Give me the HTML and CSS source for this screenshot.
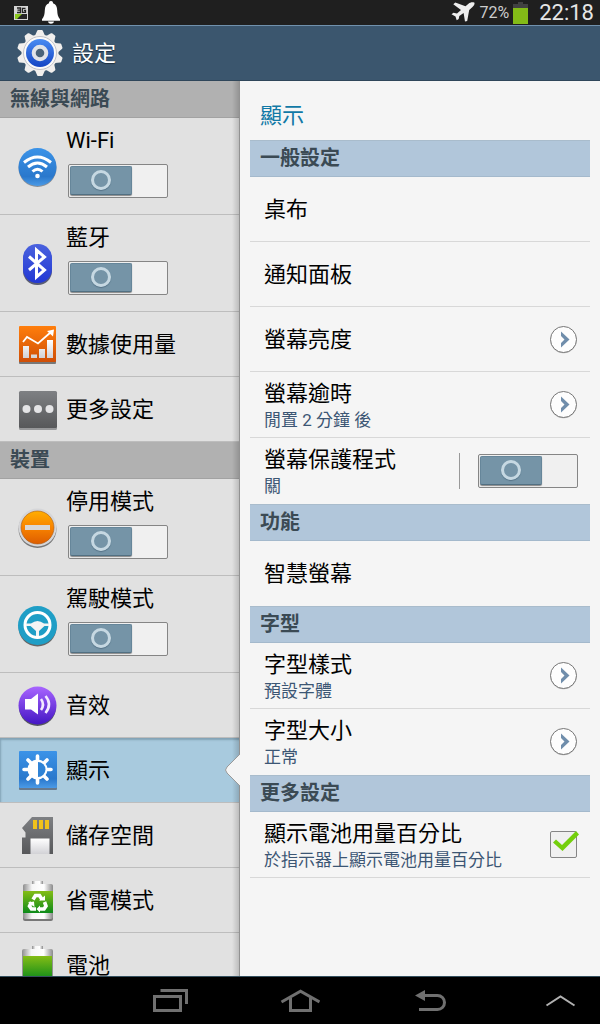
FILE: index.html
```html
<!DOCTYPE html>
<html lang="zh-Hant">
<head>
<meta charset="utf-8">
<meta name="viewport" content="width=device-width, initial-scale=1">
<title>設定</title>
<link rel="stylesheet" href="styles.css">
</head>
<body>
<svg class="defs" aria-hidden="true">
  <defs>
    <linearGradient id="g-blue" x2="0" y2="1"><stop offset="0" stop-color="#3b93e8"/><stop offset=".75" stop-color="#2a78cc"/><stop offset="1" stop-color="#4b9ae6"/></linearGradient>
    <linearGradient id="g-bt" x2="0" y2="1"><stop offset="0" stop-color="#4a62de"/><stop offset="1" stop-color="#2238d4"/></linearGradient>
    <linearGradient id="g-orange" x2="0" y2="1"><stop offset="0" stop-color="#ff7e0c"/><stop offset="1" stop-color="#cf4e07"/></linearGradient>
    <linearGradient id="g-grey" x2="0" y2="1"><stop offset="0" stop-color="#7e8083"/><stop offset="1" stop-color="#57585a"/></linearGradient>
    <linearGradient id="g-amber" x2="0" y2="1"><stop offset="0" stop-color="#ffae00"/><stop offset=".5" stop-color="#f88300"/><stop offset="1" stop-color="#dd5d00"/></linearGradient>
    <linearGradient id="g-violet" x2="0" y2="1"><stop offset="0" stop-color="#a865ff"/><stop offset="1" stop-color="#4416c4"/></linearGradient>
    <linearGradient id="g-white" x2="0" y2="1"><stop offset="0" stop-color="#fff"/><stop offset="1" stop-color="#d2d2d6"/></linearGradient>
    <linearGradient id="g-green" x2="0" y2="1"><stop offset="0" stop-color="#84bd16"/><stop offset="1" stop-color="#0c8a1a"/></linearGradient>
    <linearGradient id="g-metal"><stop offset="0" stop-color="#8e8e8e"/><stop offset=".3" stop-color="#f6f6f6"/><stop offset=".7" stop-color="#fff"/><stop offset="1" stop-color="#8a8a8a"/></linearGradient>
    <linearGradient id="g-disc" x2="0" y2="1"><stop offset="0" stop-color="#4a8cf2"/><stop offset="1" stop-color="#1545c4"/></linearGradient>
    <symbol id="chevron" viewBox="0 0 28 28">
      <circle cx="13.5" cy="14" r="13.2" fill="#b5b5b5"/>
      <circle cx="13.5" cy="13.5" r="13" fill="#fdfdfd" stroke="#777" stroke-width="1"/>
      <path d="M11 5.500L19.500 13.500 11 21.500V17L14.500 13.500 11 10z" fill="#6f8dab"/>
    </symbol>
  </defs>
</svg>

<div class="status">
  <svg class="status-sim" viewBox="0 0 14 14" role="img" aria-label="3G">
    <rect width="14" height="14" fill="#d5d5d5"/>
    <path d="M3 2h3.500v4.500H3M3.500 4.200h3M11.500 2.300H8.500v4h3V4.500H10" fill="none" stroke="#222" stroke-width="1.300"/>
    <path d="M1 8h12v5H1z" fill="#252525"/><path d="M1 8h7l-5 5H1z" fill="#8cc820"/>
  </svg>
  <svg class="status-bell" viewBox="0 0 18 23" role="img" aria-label="通知">
    <path d="M9 0a2 2 0 0 1 2 2.200c3 1 4 3.300 4.200 7 .2 4 .6 6.500 2.800 9v1.500H0v-1.500c2.200-2.500 2.600-5 2.800-9C3 5.500 4 3.200 7 2.200A2 2 0 0 1 9 0zM6 20.500h6c-.5 3-5.500 3-6 0z" fill="#fff"/>
  </svg>
  <span class="spacer"></span>
  <svg class="status-plane" viewBox="0 0 24 21" role="img" aria-label="飛航模式">
    <path d="M23.500.7c-2.200-.8-4.500-.2-6 1.100l-3 2.500L4.300.6 2.300 2.200l7.700 5.700-4 3.700-3.500-.9L.5 12.200l4 2.200 1.200 3.900 2-1.200.6-3.200 4.300-2.900 1.400 8.600 2.200-.6 2-11L21.500 5c1.500-1.300 2.200-2.500 2-4.300z" fill="#eee"/>
  </svg>
  <span class="status-pct">72%</span>
  <svg class="status-batt" viewBox="0 0 15 22" role="img" aria-label="電池">
    <path d="M5 0h5v2h5v4H0V2h5z" fill="#414141"/><path d="M0 6h15v16H0z" fill="#83bb17"/>
  </svg>
  <time class="status-time">22:18</time>
</div>

<header class="appbar">
  <svg class="gear" viewBox="-24 -24 48 48" aria-hidden="true">
    <g fill="#f1efed" stroke="#f1efed" stroke-linejoin="round" stroke-width="2">
      <circle r="17.500"/>
      <path id="tooth" d="M-4-17L-1.800-22H1.800L4-17z"/>
      <use href="#tooth" transform="rotate(36)"/><use href="#tooth" transform="rotate(72)"/><use href="#tooth" transform="rotate(108)"/><use href="#tooth" transform="rotate(144)"/><use href="#tooth" transform="rotate(180)"/><use href="#tooth" transform="rotate(216)"/><use href="#tooth" transform="rotate(252)"/><use href="#tooth" transform="rotate(288)"/><use href="#tooth" transform="rotate(324)"/>
    </g>
    <circle r="16.500" fill="#fafafa" stroke="#c4c4c8"/>
    <circle r="14" fill="url(#g-disc)"/>
    <circle r="6.300" fill="#4a6379" stroke="#e2e4e8" stroke-width="4"/>
  </svg>
  <h1 class="appbar-title">設定</h1>
</header>

<div class="panes">
  <nav class="side" aria-label="設定">
    <h2 class="side-head">無線與網路</h2>
    <div class="item item-toggle">
      <svg class="icon" viewBox="0 0 40 40" aria-hidden="true">
        <circle cx="19.500" cy="21" r="19" fill="#8a8f96"/><circle cx="19.500" cy="20" r="19" fill="url(#g-blue)"/>
        <g fill="none" stroke="#fff" stroke-width="3"><path d="M6 15.500q13.500-11 27 0M10 20q9.500-8 19 0M14.500 24.500q5-4.500 10 0"/></g><circle cx="19.500" cy="29" r="2.300" fill="#fff"/>
      </svg>
      <div class="item-body"><label for="wifi">Wi-Fi</label><input class="switch" type="checkbox" role="switch" id="wifi"></div>
    </div>
    <div class="item item-toggle">
      <svg class="icon" viewBox="0 0 40 40" aria-hidden="true">
        <rect x="5" y="2" width="29" height="39" rx="14" fill="#5a5d74"/><rect x="5" y="0" width="29" height="39" rx="14" fill="url(#g-bt)"/>
        <path d="M11 12.500l15.500 13.500-8 7V6l8 7L11 26" fill="none" stroke="#fff" stroke-width="3"/>
      </svg>
      <div class="item-body"><label for="bt">藍牙</label><input class="switch" type="checkbox" role="switch" id="bt"></div>
    </div>
    <a class="item" href="#data">
      <svg class="icon" viewBox="0 0 40 40" aria-hidden="true">
        <rect x="1" y="3" width="37" height="36" rx="1" fill="#777"/><rect x="1" y="1" width="37" height="36" rx="1" fill="url(#g-orange)"/>
        <path d="M5 21h6v12H5zM13 29.500h6V33h-6zM21 24h6v9h-6zM29 15h6v18h-6z" fill="url(#g-white)"/>
        <path d="M5 17l4-5 11 6.500L33 7" fill="none" stroke="#fff" stroke-width="1.800"/><path d="M29 6l7-1.500-1 7z" fill="#fff"/>
      </svg><span>數據使用量</span>
    </a>
    <a class="item" href="#more">
      <svg class="icon" viewBox="0 0 40 40" aria-hidden="true">
        <rect x="1" y="2" width="38" height="38" rx="1.500" fill="#97989a"/><rect x="1" y="1" width="38" height="37" rx="1.500" fill="url(#g-grey)"/>
        <g fill="#e4e4e6"><circle cx="8.500" cy="19" r="4"/><circle cx="20" cy="19" r="4"/><circle cx="31.500" cy="19" r="4"/></g>
      </svg><span>更多設定</span>
    </a>
    <h2 class="side-head">裝置</h2>
    <div class="item item-toggle">
      <svg class="icon" viewBox="0 0 40 40" aria-hidden="true">
        <circle cx="19.500" cy="21" r="19" fill="#777"/><circle cx="19.500" cy="19.500" r="19" fill="#d5d6d9"/><circle cx="19.500" cy="19.500" r="16.500" fill="url(#g-amber)" stroke="#a95a16" stroke-width=".6"/>
        <rect x="7" y="17" width="25" height="5" fill="#d9d7d5"/>
      </svg>
      <div class="item-body"><label for="block">停用模式</label><input class="switch" type="checkbox" role="switch" id="block"></div>
    </div>
    <div class="item item-toggle">
      <svg class="icon" viewBox="0 0 40 40" aria-hidden="true">
        <circle cx="19.500" cy="22.500" r="19" fill="#666"/><circle cx="19.500" cy="20.500" r="19.500" fill="#1f9ec6"/>
        <circle cx="19.500" cy="20" r="12.500" fill="none" stroke="#fff" stroke-width="3"/>
        <path d="M8 18.500h5q6.500-5 13 0h5v2.500h-4.500l-5.500 5v5h-3v-5L12.500 21H8z" fill="#f4f4f4"/>
      </svg>
      <div class="item-body"><label for="drive">駕駛模式</label><input class="switch" type="checkbox" role="switch" id="drive"></div>
    </div>
    <a class="item" href="#sound">
      <svg class="icon" viewBox="0 0 40 40" aria-hidden="true">
        <circle cx="19.500" cy="21.500" r="18.500" fill="#55555f"/><circle cx="19.500" cy="19.500" r="19" fill="url(#g-violet)"/>
        <path d="M7 13h6l7-5.500v21L13 23.500H7z" fill="#fff"/><path d="M23 13q4 5.500 0 11M27.500 10q7 8 0 17" fill="none" stroke="#f3eaff" stroke-width="2.600"/>
      </svg><span>音效</span>
    </a>
    <a class="item item-active" href="#display" aria-current="page">
      <svg class="icon" viewBox="0 0 40 40" aria-hidden="true">
        <rect x="1" y="3" width="38" height="36" rx="1" fill="#66788c"/><rect x="1" y="0" width="38" height="37" rx="1" fill="url(#g-blue)"/>
        <g transform="translate(19.500 18.500)"><g stroke="#fff" stroke-width="3.600" stroke-linecap="round"><path d="M0-13.500V13.500M-13.500 0H13.500M-9.500-9.500l19 19M9.500-9.500l-19 19"/></g><circle r="10" fill="#fff"/><path d="M.5-7.500a7.500 7.500 0 0 1 0 15z" fill="#2f83d6"/></g>
      </svg><span>顯示</span>
      <svg class="notch" viewBox="0 0 15 32" aria-hidden="true"><path d="M15 0L2 13Q-1 16 2 19L15 32z" fill="#f5f5f5"/><path d="M15 0L2 13Q-1 16 2 19L15 32" fill="none" stroke="#999"/></svg>
    </a>
    <a class="item" href="#storage">
      <svg class="icon" viewBox="0 0 40 40" aria-hidden="true">
        <path d="M14 1h21v37H4V21.500h3.500v-5L4 12z" fill="url(#g-grey)"/>
        <path d="M15 4h4v9h-4zM21 4h4v9h-4zM27 4h4v9h-4z" fill="#f1c21b"/><path d="M12.500 22.500h19V38h-19z" fill="url(#g-white)"/>
      </svg><span>儲存空間</span>
    </a>
    <a class="item" href="#power">
      <svg class="icon" viewBox="0 0 40 40" aria-hidden="true">
        <path d="M14 0h11v4H14z" fill="url(#g-metal)"/><rect x="5" y="4" width="30" height="36" rx="2" fill="#777"/><rect x="5" y="3" width="30" height="35" rx="2" fill="url(#g-metal)"/><path d="M5 10h30v22H5z" fill="url(#g-green)"/>
        <g fill="none" stroke="#fff" stroke-width="3.600"><path d="M15 18.500l2.500-4h4l2.500 4"/><path d="M26.500 21l1.500 4-2 3h-4"/><path d="M18 28h-4.500l-2-3 2-4"/></g>
        <path d="M21 19.500h6v-5zM22 24.500v7l-3.500-3.500zM10 21.500l6-1 .5 5.500z" fill="#fff"/>
      </svg><span>省電模式</span>
    </a>
    <a class="item" href="#battery">
      <svg class="icon" viewBox="0 0 40 40" aria-hidden="true">
        <path d="M14 0h11v4H14z" fill="url(#g-metal)"/><rect x="4" y="3" width="31" height="36" rx="2" fill="url(#g-metal)"/><path d="M5 10h29v24H5z" fill="url(#g-green)"/>
      </svg><span>電池</span>
    </a>
  </nav>

  <main class="main">
    <h2 class="main-title">顯示</h2>
    <h3 class="group">一般設定</h3>
    <a class="row" href="#wallpaper"><span class="row-name">桌布</span></a>
    <a class="row" href="#panel"><span class="row-name">通知面板</span></a>
    <a class="row" href="#brightness"><span class="row-name">螢幕亮度</span><svg class="chev" aria-hidden="true"><use href="#chevron"/></svg></a>
    <a class="row row-two" href="#timeout"><span class="row-text"><span class="row-name">螢幕逾時</span><span class="row-sub">閒置 2 分鐘 後</span></span><svg class="chev" aria-hidden="true"><use href="#chevron"/></svg></a>
    <div class="row row-two row-last"><label class="row-text" for="saver"><span class="row-name">螢幕保護程式</span><span class="row-sub">關</span></label><span class="rule"></span><input class="switch" type="checkbox" role="switch" id="saver"></div>
    <h3 class="group">功能</h3>
    <a class="row row-last" href="#smart"><span class="row-name">智慧螢幕</span></a>
    <h3 class="group">字型</h3>
    <a class="row row-two" href="#fontstyle"><span class="row-text"><span class="row-name">字型樣式</span><span class="row-sub">預設字體</span></span><svg class="chev" aria-hidden="true"><use href="#chevron"/></svg></a>
    <a class="row row-two row-last" href="#fontsize"><span class="row-text"><span class="row-name">字型大小</span><span class="row-sub">正常</span></span><svg class="chev" aria-hidden="true"><use href="#chevron"/></svg></a>
    <h3 class="group">更多設定</h3>
    <div class="row row-two"><label class="row-text" for="pct"><span class="row-name">顯示電池用量百分比</span><span class="row-sub">於指示器上顯示電池用量百分比</span></label><span class="tick"><input class="check" type="checkbox" id="pct" checked><svg class="tick-mark" viewBox="0 0 28 28" aria-hidden="true"><path d="M3 11.500l3-3 6 5.500L26 0l3 3.500L12.500 20z" fill="#74cf0c"/></svg></span></div>
  </main>
</div>

<footer class="nav">
  <div class="nav-main">
    <button class="nav-btn" type="button" aria-label="最近使用"><svg viewBox="0 0 40 24"><path d="M4.500 7.500h26v14h-26zM10.500 1.500h26V15" fill="none" stroke="#707070" stroke-width="3"/></svg></button>
    <button class="nav-btn" type="button" aria-label="首頁"><svg viewBox="0 0 40 24"><path d="M1.500 13L20.500 2.300 39.500 13M10.500 9v12.500h20V9" fill="none" stroke="#707070" stroke-width="3"/></svg></button>
    <button class="nav-btn" type="button" aria-label="返回"><svg viewBox="0 0 40 24"><path d="M13 6.500h14.500a7 7 0 0 1 0 14H9" fill="none" stroke="#707070" stroke-width="3"/><path d="M5 6.500L15 1v11z" fill="#707070"/></svg></button>
  </div>
  <button class="nav-btn nav-up" type="button" aria-label="展開"><svg viewBox="0 0 40 24"><path d="M6.500 16.500l14-9 14 9" fill="none" stroke="#b0b0b0" stroke-width="2"/></svg></button>
</footer>
</body>
</html>
```

FILE: styles.css
```css
*, *::before, *::after { box-sizing: border-box; }

body {
  margin: 0;
  height: 100vh;
  display: flex;
  flex-direction: column;
  overflow: hidden;
  background: #f5f5f5;
  color: #000;
  font: 22px/28px Roboto, "Noto Sans CJK TC", sans-serif;
}

h1, h2, h3 { margin: 0; }
a { color: inherit; text-decoration: none; }
svg { display: block; flex: none; }
.defs { position: absolute; width: 0; height: 0; }

/* Status bar */
.status {
  flex: none;
  height: 25px;
  padding: 0 6px 0 14px;
  display: flex;
  align-items: center;
  background: #1f1f1f;
  color: #e6e6e6;
}
.status-sim { width: 14px; height: 14px; margin-right: 14px; }
.status-bell { width: 18px; height: 23px; }
.spacer { flex: 1; }
.status-plane { width: 24px; height: 21px; margin-right: 5px; }
.status-pct { font-size: 16px; color: #ccc; }
.status-batt { width: 15px; height: 22px; margin: 0 11px 0 4px; }

/* Title bar */
.appbar {
  flex: none;
  height: 56px;
  padding-left: 16px;
  display: flex;
  align-items: center;
  gap: 8px;
  background: #3b566e;
  border-top: 1px solid #7091ad;
  border-bottom: 1px solid #2f465a;
}
.gear { width: 48px; height: 48px; }
.appbar-title {
  padding-top: 2px;
  font-size: 22px;
  font-weight: 400;
  color: #fff;
  text-shadow: 0 1px 1px #1c2e3e;
}

.panes { flex: 1; min-height: 0; display: flex; }

/* Left list */
.side {
  position: relative;
  width: 40%;
  overflow: hidden;
  background: #e1e1e1;
}
.side::after {
  content: "";
  position: absolute;
  inset: 0 0 0 auto;
  width: 8px;
  background: linear-gradient(to right, transparent, rgba(0, 0, 0, .16));
  border-right: 1px solid #929292;
  pointer-events: none;
}
.side-head {
  height: 37px;
  padding-left: 10px;
  font-size: 20px;
  line-height: 36px;
  color: #3b4a54;
  background: #b1b1b1;
  border-bottom: 1px solid #a2a2a2;
}
.item {
  position: relative;
  height: 65px;
  padding: 2px 0 0 18px;
  display: flex;
  align-items: center;
  gap: 8px;
  border-bottom: 1px solid #bdbdbd;
}
.item-toggle { height: 97px; }
.item-body {
  align-self: flex-start;
  padding-top: 7px;
  display: flex;
  flex-direction: column;
  gap: 9px;
}
.item-body .switch { margin-left: 2px; }
.icon { width: 40px; height: 40px; overflow: visible; }
.item-active {
  background: #a8cade;
  box-shadow: inset 1px 2px 2px #82a2b5;
}
.notch {
  position: absolute;
  z-index: 1;
  right: 0;
  top: 16px;
  width: 15px;
  height: 32px;
}

/* On/off switch */
.switch {
  appearance: none;
  position: relative;
  flex: none;
  width: 100px;
  height: 34px;
  margin: 0;
  background: #f0f0f0;
  border: 1px solid #858585;
  border-radius: 2px;
}
.switch::before {
  content: "";
  position: absolute;
  left: 1px;
  top: 1px;
  width: 62px;
  height: 29px;
  background: #7594a7;
  border: 1px solid #66869a;
  border-bottom-color: #527082;
  border-radius: 2px;
  box-shadow: 0 1px 1px #888;
}
.switch::after {
  content: "";
  position: absolute;
  left: 22px;
  top: 5px;
  width: 20px;
  height: 20px;
  border: 3px solid #c6d8e2;
  border-radius: 50%;
  box-shadow: 0 1px 1px #557286;
}

/* Right pane */
.main {
  flex: 1;
  min-width: 0;
  padding: 0 10px;
  background: #f5f5f5;
}
.main-title {
  height: 59px;
  padding: 21px 10px 0;
  font-size: 22px;
  font-weight: 400;
  color: #1179a6;
}
.group {
  height: 37px;
  padding-left: 10px;
  font-size: 20px;
  line-height: 35px;
  color: #3b4a54;
  background: #b1c6da;
  border-top: 1px solid #a9bccc;
  border-bottom: 1px solid #a4b9cc;
}
.row {
  height: 65px;
  padding: 2px 12px 0 14px;
  display: flex;
  align-items: center;
  border-bottom: 1px solid #d8d8d8;
}
.row-two { height: 66px; padding-top: 0; }
.row-last { border-bottom-color: transparent; }
.row-name { flex: 1; }
.row-text {
  flex: 1;
  padding-top: 3px;
  display: flex;
  flex-direction: column;
}
.row-sub { font-size: 17px; line-height: 24px; color: #3c5674; }
.chev { width: 28px; height: 28px; }
.rule { width: 1px; height: 36px; margin-right: 18px; background: #999; }
.tick { position: relative; width: 28px; height: 28px; }
.check {
  appearance: none;
  display: block;
  width: 27px;
  height: 27px;
  margin: 0;
  background: #f0f0f0;
  border: 1px solid #858585;
  border-radius: 2px;
}
.tick-mark {
  position: absolute;
  inset: 0;
  overflow: visible;
  pointer-events: none;
}

/* Navigation bar */
.nav {
  flex: none;
  height: 48px;
  padding-right: 20px;
  display: grid;
  grid-template-columns: 1fr auto 1fr;
  align-items: center;
  background: #000;
  border-top: 1px solid #34505f;
}
.nav-main { grid-column: 2; margin-left: 20px; display: flex; gap: 90px; }
.nav-btn { width: 40px; height: 24px; padding: 0; border: 0; background: none; }
.nav-up { justify-self: end; }
```
